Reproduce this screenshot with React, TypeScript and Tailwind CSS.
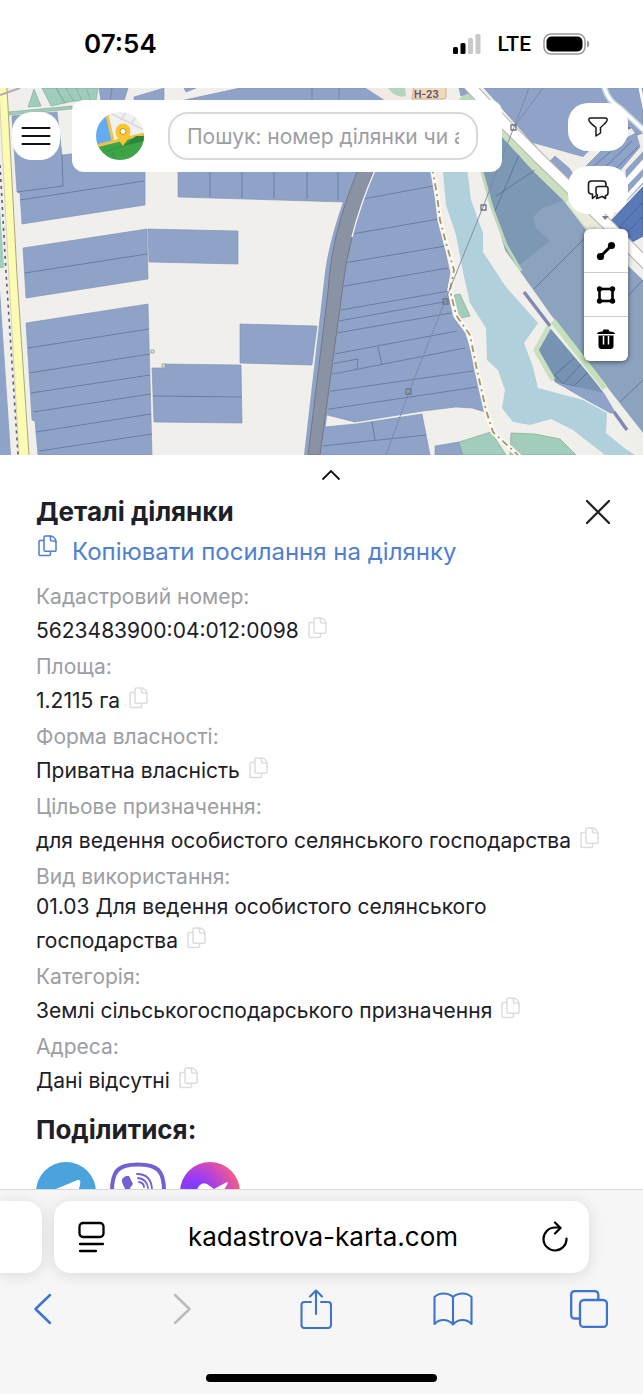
import React from "react";

const fields: { label: string; value: string }[] = [
  { label: "Кадастровий номер:", value: "5623483900:04:012:0098" },
  { label: "Площа:", value: "1.2115 га" },
  { label: "Форма власності:", value: "Приватна власність" },
  { label: "Цільове призначення:", value: "для ведення особистого селянського господарства" },
  { label: "Вид використання:", value: "01.03 Для ведення особистого селянського господарства" },
  { label: "Категорія:", value: "Землі сільськогосподарського призначення" },
  { label: "Адреса:", value: "Дані відсутні" },
];

function CopyIcon() {
  return (
    <svg className="h-[22px] w-[19px]" viewBox="0 0 19 22" fill="none" stroke="currentColor" strokeWidth="1.5" strokeLinejoin="round" aria-hidden="true">
      <path d="M6 5.5H2.2A1.2 1.2 0 0 0 1 6.700V19.300A1.200 1.200 0 0 0 2.200 20.500H11.300A1.200 1.200 0 0 0 12.500 19.300V16.200" />
      <path d="M7.200 1H12.500C15.500 1 18 4 18 7V15A1.200 1.200 0 0 1 16.800 16.200H7.200A1.200 1.200 0 0 1 6 15V2.200A1.200 1.200 0 0 1 7.200 1Z" />
      <path d="M11.500 1C12.800 1.600 12.600 3.200 12.600 5.800C15 5.800 17.300 5.700 18 7.300" />
    </svg>
  );
}

function StatusBar() {
  return (
    <header className="flex h-[88px] shrink-0 items-center justify-between bg-white pr-[53px] pl-[84px] text-black">
      <time className="text-[26px] leading-8 font-semibold">07:54</time>
      <div className="flex items-center gap-3">
        <svg className="h-5 w-[33px]" viewBox="0 0 33 20" aria-label="Сигнал">
          <rect x="0" y="13" width="5" height="7" rx="1.500" />
          <rect x="7.500" y="9" width="5" height="11" rx="1.500" />
          <rect x="15" y="4" width="5" height="16" rx="1.500" fill="#c9c9c9" />
          <rect x="22.500" y="0" width="5" height="20" rx="1.500" fill="#c9c9c9" />
        </svg>
        <span className="font-[Roboto] text-[21px] leading-6 font-medium">LTE</span>
        <svg className="h-[22px] w-[47px]" viewBox="0 0 47 22" aria-label="Батарея">
          <rect x="1" y="1" width="41" height="20" rx="7" fill="none" stroke="#999" strokeWidth="1.500" />
          <rect x="3.500" y="3.500" width="36" height="15" rx="5" />
          <path d="M44 7.500c3 .8 3 6.200 0 7z" fill="#999" />
        </svg>
      </div>
    </header>
  );
}

const parcel = { fill: "#8fa3c8", stroke: "#7c8fb3", strokeWidth: 0.6 };

function MapCanvas() {
  return (
    <svg className="block h-[367px] w-full" viewBox="0 88 643 367" preserveAspectRatio="xMidYMid slice" aria-label="Кадастрова карта">
      <rect x="-400" y="88" width="1500" height="367" fill="#f0efeb" />

      {/* north strip */}
      <g fill="#9fcdb9" stroke="#6f9f8c" strokeWidth="0.5">
        <path d="M34 89L28 107 41 106ZM42 88L51 106 65 103 56 88ZM56 88L65 103 74 101 96 101 98 88Z" />
        <path d="M66 88L74 102M76 88L82 101M86 88L91 101" fill="none" />
        <path d="M8 112L72 106V109L8 115Z" />
      </g>
      <g {...parcel}>
        <path d="M99 88H128L124 101H101ZM134 97L164 88V101H134ZM184 88H196L186 92ZM180 101L240 88H366L386 101Z" />
        <path d="M312 88V101M339 88V101M112 88L110 101" stroke="#5f7299" />
      </g>
      <path d="M366 88H440V101H386Z" fill="#f2e9e2" />
      <path d="M388 88Q396 99 406 96L405 88Z" fill="#b5d4bd" />
      <path d="M414 86H446V97Q446 99 443 99H412Z" fill="#f0d9b8" stroke="#c9a184" strokeWidth="0.8" />
      <text x="414" y="98" fontSize="10" fontWeight="700" fill="#62577a" fontFamily="Inter, sans-serif">H-23</text>
      <path d="M459 88H466L470 93 461 96Z" {...parcel} />
      <path d="M466 88H480L474 101H458L462 96 470 93Z" fill="#b9d9b8" />

      {/* west road */}
      <path d="M0 208L4 268H0Z" fill="#9fcdb9" />
      <path d="M0 290L11 455H0Z" fill="#8fa3c8" />
      <path d="M-1 88L9 275 19 455H29L17 275 7 88Z" fill="#fbfbb2" />
      <path d="M7 88L17 275 29 455" fill="none" stroke="#a9a97c" strokeWidth="1" />
      <path d="M-1 88L8 260 19 455" fill="none" stroke="#d7d5a9" strokeWidth="1" />
      <path d="M0 165L6 272 18 455" fill="none" stroke="#5d5c85" strokeWidth="1.600" strokeDasharray="3 4" />
      <path d="M0 95L20 88" stroke="#b9a9b5" strokeWidth="2" />

      {/* west parcels */}
      <g {...parcel}>
        <path d="M12 116L57 112 62 155 145 145V205L22 224 20 193 17 192Z" />
        <path d="M23 248L147 229 148 279 26 298Z" />
        <path d="M26 323L148 304 152 455H38L35 421 32 420Z" />
        <path d="M148 229L238 231V264L149 262Z" />
        <path d="M152 368H165V364L241 365 242 423 154 422Z" />
        <path d="M240 324L317 326 312 365 240 363Z" />
        <path d="M178 160H362L344 202 178 197Z" />
      </g>
      <path
        d="M17 192L63 186 62 155M20 200L144 181M25 273L147 254M28 348L149 329M29 373L150 354M31 393L150 375M33 412L151 394M36 432L151 414M39 451L152 434M153 396L242 397M210 160V197M242 160V198M274 160V198M307 160V199M338 160V200"
        fill="none" stroke="#5f7299" strokeWidth="0.8"
      />
      <g fill="none" stroke="#8fae9f" strokeWidth="1"><path d="M151 350h3v3h-3zM162 364h4v3h-4z" /></g>

      {/* central field */}
      <path {...parcel} d="M374 160H430L433 172 438 218 450 273 447 290 453 317 465 333 473 360 485 412 472 408 456 407 423 411 355 422 323 414 343 275 353 225Z" />
      <path {...parcel} d="M324 427L356 424 422 414 430 455H318Z" />
      <path
        d="M363 199L433 186M352 234L439 219M344 263L446 246M339 287L448 268M335 311L449 291M333 322L449 301M331 334L451 313M329 355L457 331M331 364L358 359 357 369M378 347L382 365M328 375L465 348M325 392L473 371M323 410L477 387M322 446L426 435M372 422L375 440"
        fill="none" stroke="#5f7299" strokeWidth="0.8"
      />
      <path d="M356 172L343 202Q329 242 325 272L304 455H322L344 285Q350 238 372 178V160Z" fill="#8fa3c8" />
      <path d="M362 160Q348 193 341 218Q330 254 328 292L308 455H320L343 285Q348 238 373 172L378 160Z" fill="#8a93a3" stroke="#72737f" strokeWidth="0.9" />
      <path d="M375 170Q360 205 352 237" fill="none" stroke="#fafafa" strokeWidth="1.300" />

      {/* river */}
      <path d="M443 160V172L446 205 456 235 463 272 470 303 486 328 487 360 498 370 505 390 502 408 513 422 530 425 551 419 573 430 605 455H635L623 447 606 433 607 413 583 400 538 388 533 367 524 343 538 323 506 287 483 252 483 233 471 200 466 160Z" fill="#b0d0dc" />

      {/* southern meadows */}
      <path {...parcel} d="M435 446L459 442 463 455H435Z" />
      <g fill="#a2cdbb" stroke="#82aa96" strokeWidth="0.7">
        <path d="M459 442L491 432 506 455H463ZM511 433L535 434 560 439 576 455H510Z" />
        <path d="M450 296L460 294 470 316 457 319Z" />
      </g>

      {/* eastern fields */}
      <path d="M482 160L503 127 568 195 588 228 643 280V433L551 320 521 275 505 250 491 200 483 172Z" fill="#8ba3bf" />
      <path d="M484 172L502 137 535 172 563 200 551 205 541 209 533 217 536 228 550 241 518 266 505 247Z" fill="#7c98b4" />
      <path d="M482 172L491 205 506 245 521 271" fill="none" stroke="#bcd8b5" strokeWidth="3" />
      <path d="M500 122L520 139 570 193 596 228 586 230 563 200 534 172 502 137Z" fill="#c9dfbf" />
      <path d="M572 195L600 226 588 230 566 203Z" fill="#e9ead8" />
      <path d="M496 196L535 170M495 211L519 155M534 289L586 237M620 402L643 380M629 295L643 280" stroke="#57709a" strokeWidth="0.8" />
      <path d="M550 323L536 350 555 382 588 401 612 414 603 392Z" fill="#7793b3" />
      <path d="M550 325L536 350 553 380" fill="none" stroke="#c9dfbf" strokeWidth="5" />
      <path d="M555 375L574 358M563 384L581 364M575 385L590 370M555 375L563 384 575 386" fill="none" stroke="#526b91" strokeWidth="0.8" />
      <path d="M555 382L604 393 616 413 610 413Z" fill="#8fa3c8" />
      <path d="M505 250L551 315 643 433V455H640L605 393 545 322Z" fill="#efefe9" />
      <path d="M553 321L605 388" stroke="#c6e0bc" strokeWidth="6" />
      <path d="M524 292L550 326M614 412L627 430" stroke="#8089b1" strokeWidth="3.500" />

      {/* north east */}
      <path {...parcel} d="M484 88H643V133L598 150 583 157 536 147Z" />
      <path d="M533 143L583 157 600 140 630 126 643 145V240L600 215Z" fill="#efeee9" />
      <path {...parcel} d="M548 163L555 156 569 168 590 200 569 187ZM585 167L602 150 636 133 640 147 612 180Z" />
      <path d="M594 166L624 140M600 172L632 141M606 178L638 147" stroke="#57709a" strokeWidth="0.8" />
      <path {...parcel} d="M626 170L643 152V162L626 180Z" />
      <path d="M600 212L650 156" stroke="#fff" strokeWidth="6" />
      <path d="M610 204L650 162V176L614 214Z" {...parcel} />
      <path d="M604 222L646 176" stroke="#fff" strokeWidth="4" />
      <path d="M610 222L643 187V236L630 243Z" fill="#5979b7" stroke="#4668a5" />
      <path d="M617 230L643 202M623 237L643 216" stroke="#3f5f9a" strokeWidth="0.8" />
      <path d="M466 82L503 122 540 159 572 190 610 227 660 278" fill="none" stroke="#b9b5ad" strokeWidth="12" />
      <path d="M466 82L503 122 540 159 572 190 610 227 660 278" fill="none" stroke="#fff" strokeWidth="10" />
      <path d="M604 86Q607 100 620 108L650 136" fill="none" stroke="#c8dce0" strokeWidth="6" />
      <path d="M604 86Q607 100 620 108L650 136" fill="none" stroke="#fff" strokeWidth="3" />
      <path d="M640 88L645 112" stroke="#fff" strokeWidth="3" />
      <path d="M602 216L609 216 605 220ZM627 125L632 128 627 130Z" fill="#777e92" />

      {/* footpath */}
      <path d="M428 150L433 172 437 195 440 220 446 243 454 270 450 290 456 315 470 335 477 370 486 410 493 432 520 457" fill="none" stroke="#faf8f2" strokeWidth="5" />
      <path d="M428 150L433 172 437 195 440 220 446 243 454 270 450 290 456 315 470 335 477 370 486 410 493 432 520 457" fill="none" stroke="#ad9468" strokeWidth="1.800" strokeDasharray="7 4 2 4" />

      {/* power line */}
      <path d="M543 88L514 127 483 207 445 301 409 392 386 455M529 88L514 127" fill="none" stroke="#7f869d" strokeWidth="0.9" />
      <g fill="none" stroke="#6f7587" strokeWidth="1.300"><path d="M511 125h5v5h-5zM481 205h5v5h-5zM443 299h5v5h-5zM406 389h5v5h-5z" /></g>
    </svg>
  );
}

function Logo() {
  return (
    <svg className="h-12 w-12 shrink-0" viewBox="0 0 48 48" role="img" aria-label="Кадастрова карта">
      <clipPath id="logo-clip"><circle cx="24" cy="24" r="24" /></clipPath>
      <g clipPath="url(#logo-clip)">
        <rect width="48" height="48" fill="#f0f0f3" />
        <path d="M12 0L48 18M25 8L30 0M35 12L41 3" stroke="#d2d3dc" strokeWidth="1.300" />
        <path d="M0 0H10L17 30 0 34Z" fill="#63acf1" />
        <path d="M11 3L18 33" stroke="#f1c348" strokeWidth="3" />
        <path d="M0 34L48 22V48H0Z" fill="#3da447" />
        <path d="M0 34L48 22" stroke="#efc247" strokeWidth="3" />
        <path d="M27 34L40 24H48V29Z" fill="#2c8639" />
        <path d="M11 40L35 30M19 47L16 40M28 45L25 38" stroke="#32933e" strokeWidth="1" />
        <path d="M27 34C24 29 19.500 25 19.500 19a7.500 7.500 0 0 1 15 0C34.500 25 30 29 27 34Z" fill="#f9c62f" />
        <circle cx="27" cy="19.500" r="3" fill="#fff" stroke="#c58b1e" strokeWidth="1" />
      </g>
    </svg>
  );
}

function MapSection() {
  const round = "flex h-12 w-[60px] items-center justify-center rounded-[20px] bg-white text-[#17191d]";
  const tool = "flex h-11 w-full items-center justify-center border-[#ccc] text-black";
  return (
    <section className="relative shrink-0 overflow-hidden">
      <MapCanvas />
      <div className="absolute inset-x-0 top-0 flex items-start pr-[15px] pl-3">
        <button aria-label="Меню" className="mt-6 flex h-12 w-12 shrink-0 items-center justify-center rounded-[20px] bg-white">
          <svg className="h-5 w-[30px]" viewBox="0 0 30 20" stroke="#111" strokeWidth="2.200" strokeLinecap="round"><path d="M1.500 2H28.500M1.500 10H28.500M1.500 18H28.500" /></svg>
        </button>
        <form className="mt-3 ml-3 flex h-[72px] min-w-0 flex-1 items-center gap-6 rounded-xl bg-white px-6">
          <Logo />
          <input aria-label="Пошук" placeholder="Пошук: номер ділянки чи адреса" className="h-12 min-w-0 flex-1 rounded-[20px] border-2 border-[#d9d9d9] bg-white px-[17px] text-[21px] text-black outline-none placeholder:text-[#9b9ea4]" />
        </form>
        <div className="mt-[15px] ml-[66px] flex shrink-0 flex-col items-end gap-[15px]">
          <button aria-label="Фільтр" className={round}>
            <svg className="h-5 w-5" viewBox="0 0 20 20" fill="none" stroke="currentColor" strokeWidth="1.500" strokeLinejoin="round">
              <path d="M2.500 1H17.500Q19.500 1 19 3.500Q18 6 12.500 10.500V16L8 19V10.500Q2 6 1 3.500Q.5 1 2.500 1Z" />
            </svg>
          </button>
          <button aria-label="Коментарі" className={round}>
            <svg className="h-5 w-[22px]" viewBox="0 0 22 20" fill="none" stroke="currentColor" strokeWidth="1.600" strokeLinejoin="round">
              <path d="M19 6.500V4Q19 1 16 1H4.500Q1.500 1 1.500 4V11Q1.500 14 4.500 14H5.500V18.500L9 15.500" />
              <path d="M11.500 6.500H19Q21 6.500 21 8.500V12.500Q21 15.500 18.500 15.500V18.500L15.500 16.500 9.500 18.500 10.500 15Q9 14.500 9 12.500V8.500Q9 6.500 11.500 6.500Z" />
            </svg>
          </button>
          <div className="w-11 divide-y overflow-hidden rounded-md bg-white shadow-[0_1px_5px_rgba(0,0,0,0.55)]">
            <button aria-label="Виміряти відстань" className={tool}>
              <svg className="h-5 w-5" viewBox="0 0 20 20"><path d="M4.500 15.500L15.500 4.500" stroke="#000" strokeWidth="2.800" /><circle cx="4.500" cy="15.500" r="3.600" /><circle cx="15.500" cy="4.500" r="3.600" /></svg>
            </button>
            <button aria-label="Виміряти площу" className={tool}>
              <svg className="h-5 w-5" viewBox="0 0 20 20"><rect x="3.500" y="4" width="13" height="12" fill="none" stroke="#000" strokeWidth="2.600" /><circle cx="3.500" cy="4" r="2.700" /><circle cx="16.500" cy="4" r="2.700" /><circle cx="3.500" cy="16" r="2.700" /><circle cx="16.500" cy="16" r="2.700" /></svg>
            </button>
            <button aria-label="Видалити" className={tool}>
              <svg className="h-5 w-5" viewBox="0 0 20 20"><path d="M1 5Q1 2.500 6.500 2.500L7.500 .5H12.500L13.500 2.500Q19 2.500 19 5Z" /><path d="M2.500 6.500H17.500V17Q17.500 20 14.500 20H5.500Q2.500 20 2.500 17Z" /><path d="M7.500 7V15.500M12.500 7V15.500" stroke="#fff" strokeWidth="1.500" /></svg>
            </button>
          </div>
        </div>
      </div>
    </section>
  );
}

function ShareRow() {
  return (
    <div className="mt-4 flex gap-3">
      <a href="#telegram" aria-label="Telegram">
        <svg className="h-[60px] w-[60px]" viewBox="0 0 60 60"><circle cx="30" cy="30" r="30" fill="#4ba3dd" /><path d="M13 30L42 18Q45 18 44 22L39 43Q38 46 35 44L27 38 23 42 22 34 37 22 19 32Z" fill="#fff" /><path d="M13 30L42 18Q45 18 44 22L42 30 34 28 36 25 30 30Z" fill="#fff" /><path d="M22 34L36 25 26 37Z" fill="#cbddea" /></svg>
      </a>
      <a href="#viber" aria-label="Viber">
        <svg className="h-[60px] w-[60px]" viewBox="0 0 60 60" fill="none" stroke="#7360d2" strokeWidth="4">
          <path d="M30 2.500C10 2.500 4 9 4 29C4 43 8 48 16 50V58L24 52C49 54 56 48 56 29C56 9 50 2.500 30 2.500Z" fill="#fff" />
          <path d="M18 14Q13 16 14 20Q20 38 39 45Q43 44 45 39L37 34 33 37Q25 33 22 26L25 22 21 14Z" fill="#7360d2" stroke="none" />
          <path d="M29 12Q43 12 44 27M30 16Q39 17 40 26M31 20Q36 21 36 25" strokeWidth="1.800" strokeLinecap="round" />
        </svg>
      </a>
      <a href="#messenger" aria-label="Messenger">
        <svg className="h-[60px] w-[60px]" viewBox="0 0 60 60">
          <defs><radialGradient id="msg" cx="0.200" cy="0.600" r="0.900"><stop offset="0" stopColor="#5b48ff" /><stop offset="0.350" stopColor="#933af8" /><stop offset="0.700" stopColor="#d44bba" /><stop offset="1" stopColor="#ff6968" /></radialGradient></defs>
          <circle cx="30" cy="30" r="30" fill="url(#msg)" />
          <path d="M11 38L19 24Q22 20 27 22L34 27 45 21Q49 19 47 23L39 36Q36 40 32 36L26 32 15 39Q11 41 11 38Z" fill="#fff" />
        </svg>
      </a>
    </div>
  );
}

function DetailsPanel() {
  return (
    <main className="min-h-0 flex-1 overflow-y-auto bg-white px-9 text-[21px] leading-[30px] text-[#1c2028] [scrollbar-width:none]">
      <div className="flex h-10 items-center justify-center pl-[18px]">
        <button aria-label="Згорнути">
          <svg className="h-3 w-5" viewBox="0 0 20 12" fill="none" stroke="#111" strokeWidth="1.800"><path d="M1.500 10.500L10 2L18.500 10.500" /></svg>
        </button>
      </div>
      <div className="flex h-[34px] items-center justify-between">
        <h1 className="text-[26px] leading-8 font-bold">Деталі ділянки</h1>
        <button aria-label="Закрити" className="-mr-1">
          <svg className="h-[26px] w-[26px]" viewBox="0 0 26 26" fill="none" stroke="#1c2028" strokeWidth="2.300" strokeLinecap="round"><path d="M2 2L24 24M24 2L2 24" /></svg>
        </button>
      </div>
      <button className="flex h-[46px] items-center gap-[15px] pl-0.5 text-2xl text-[#4f7fd0]">
        <span className="pb-3"><CopyIcon /></span>
        <span>Копіювати посилання на ділянку</span>
      </button>
      <dl className="mt-[7px]">
        {fields.map((f) => (
          <div key={f.label}>
            <dt className="text-[#9b9ea4]">{f.label}</dt>
            <dd>
              {f.value}
              <button aria-label={"Копіювати: " + f.value} className="ml-[9px] inline-flex h-10 items-start pt-[5px] align-middle text-[#dddddd]"><CopyIcon /></button>
            </dd>
          </div>
        ))}
      </dl>
      <h2 className="mt-3 text-[26px] leading-8 font-bold">Поділитися:</h2>
      <ShareRow />
    </main>
  );
}

function BrowserBar() {
  const item = "flex w-10 items-center justify-center";
  return (
    <footer className="shrink-0 overflow-hidden border-t border-[#d8d8d8] bg-[#f6f6f6] text-black">
      <div className="flex gap-3 pt-[11px] pr-[54px]">
        <div className="h-[72px] w-[42px] shrink-0 rounded-r-2xl bg-white shadow-[0_2px_16px_rgba(0,0,0,0.12)]" />
        <div className="flex h-[72px] min-w-0 flex-1 items-center justify-between rounded-2xl bg-white pr-5 pl-6 shadow-[0_2px_16px_rgba(0,0,0,0.12)]">
          <button aria-label="Налаштування сторінки">
            <svg className="h-8 w-[27px]" viewBox="0 0 27 32" fill="none" stroke="#000" strokeWidth="2.300" strokeLinecap="round"><rect x="1.500" y="2" width="24" height="14" rx="3.500" /><path d="M2 23H25M2 30H18" /></svg>
          </button>
          <span className="text-[26px] leading-8">kadastrova-karta.com</span>
          <button aria-label="Оновити">
            <svg className="h-8 w-7" viewBox="0 0 28 32" fill="none" stroke="#000" strokeWidth="2.200" strokeLinecap="round" strokeLinejoin="round"><path d="M25.500 17.500A11.500 11.500 0 1 1 14 6.500H19.500M14 1.500L19.500 7 14 12.500" /></svg>
          </button>
        </div>
      </div>
      <nav className="flex h-[72px] items-center justify-between pr-[34px] pl-[23px] text-[#3f74cc]">
        <button aria-label="Назад" className={item}><svg className="h-[34px] w-5" viewBox="0 0 20 34" fill="none" stroke="currentColor" strokeWidth="2.500" strokeLinecap="round" strokeLinejoin="round"><path d="M17 3L2.500 17L17 31" /></svg></button>
        <button aria-label="Вперед" className={item + " pl-1 text-[#bcbcbc]"}><svg className="h-[34px] w-5" viewBox="0 0 20 34" fill="none" stroke="currentColor" strokeWidth="2.500" strokeLinecap="round" strokeLinejoin="round"><path d="M3 3L17.500 17L3 31" /></svg></button>
        <button aria-label="Поділитися" className={item}><svg className="h-10 w-8" viewBox="0 0 32 40" fill="none" stroke="currentColor" strokeWidth="2.100" strokeLinecap="round" strokeLinejoin="round"><path d="M11 13H4.500Q1.500 13 1.500 16V36Q1.500 39 4.500 39H28Q31 39 31 36V16Q31 13 28 13H21M16 25V1.500M10 7.500L16 1.500 22 7.500" /></svg></button>
        <button aria-label="Закладки" className={item}><svg className="h-[34px] w-10" viewBox="0 0 40 34" fill="none" stroke="currentColor" strokeWidth="2.100" strokeLinejoin="round"><path d="M20 32V5Q16 1.500 10.500 1.500T1.500 5V32Q5 28 10.500 28T20 32.500ZM20 32.500Q24 28 29.500 28T38.500 32V5Q35 1.500 29.500 1.500T20 5" /></svg></button>
        <button aria-label="Вкладки" className={item}><svg className="h-[38px] w-[38px]" viewBox="0 0 38 38" fill="none" stroke="currentColor" strokeWidth="2.300"><rect x="10" y="10" width="27" height="27" rx="4" /><path d="M10 28.500H5Q1.200 28.500 1.200 24.700V5Q1.200 1.200 5 1.200H24.500Q28.300 1.200 28.300 5V10" /></svg></button>
      </nav>
      <div className="flex justify-center pt-[29px] pb-3">
        <div className="h-2 w-[231px] rounded-full bg-black" />
      </div>
    </footer>
  );
}

export default function App() {
  return (
    <div className="flex h-screen flex-col bg-white font-[Inter,'Noto_Sans',sans-serif]">
      <StatusBar />
      <MapSection />
      <DetailsPanel />
      <BrowserBar />
    </div>
  );
}
